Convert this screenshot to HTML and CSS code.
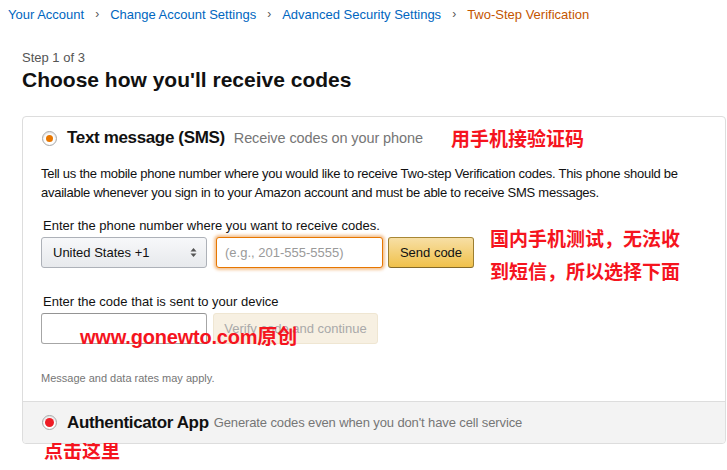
FILE: index.html
```html
<!DOCTYPE html>
<html lang="en">

<head>
  <meta charset="UTF-8">
  <meta name="viewport" content="width=device-width, initial-scale=1.0">
  <title>Two-Step Verification</title>
  <link rel="stylesheet" href="styles.css">
</head>

<body>
  <nav class="crumbs">
    <a href="javascript:;">Your Account</a>
    <span class="sep">›</span>
    <a href="javascript:;">Change Account Settings</a>
    <span class="sep">›</span>
    <a href="javascript:;">Advanced Security Settings</a>
    <span class="sep">›</span>
    <span class="current">Two-Step Verification</span>
  </nav>

  <div class="page">
    <div class="step">Step 1 of 3</div>
    <h1>Choose how you'll receive codes</h1>

    <div class="options">
      <!-- 短信方式 -->
      <section class="option option-sms">
        <div class="option-head">
          <span class="radio radio-on"></span>
          <strong>Text message (SMS)</strong>
          <span class="hint hint-big">Receive codes on your phone</span>
        </div>
        <p class="intro">Tell us the mobile phone number where you would like to receive Two-step Verification codes. This phone should be available whenever you sign in to your Amazon account and must be able to receive SMS messages.</p>

        <div class="field-label">Enter the phone number where you want to receive codes.</div>
        <div class="row">
          <div class="select">United States +1
            <svg class="arrows" width="7" height="11" viewBox="0 0 7 11">
              <path d="M3.5 1 L6.5 4.5 H0.5 Z M3.5 10 L6.5 6.5 H0.5 Z" fill="#555"/>
            </svg>
          </div>
          <input class="text-input phone" type="text" placeholder="(e.g., 201-555-5555)">
          <button class="btn btn-primary">Send code</button>
        </div>

        <div class="field-label field-label-code">Enter the code that is sent to your device</div>
        <div class="row row-code">
          <input class="text-input code" type="text">
          <button class="btn btn-disabled">Verify code and continue</button>
        </div>

        <p class="fine">Message and data rates may apply.</p>

        <!-- 标注 -->
        <div class="note note-top">用手机接验证码</div>
        <div class="note note-side">国内手机测试，无法收<br>到短信，所以选择下面</div>
        <div class="note note-site">www.gonewto.com原创</div>
      </section>

      <!-- 验证器 -->
      <section class="option option-app">
        <div class="option-head">
          <span class="radio radio-red"></span>
          <strong>Authenticator App</strong>
          <span class="hint">Generate codes even when you don't have cell service</span>
        </div>
      </section>
    </div>

    <div class="note note-click">点击这里</div>
  </div>
</body>

</html>
```

FILE: styles.css
```css
html,
body {
  margin: 0;
  padding: 0;
  background: #fff;
  font-family: "Liberation Sans", Arial, sans-serif;
  color: #111;
}

a {
  text-decoration: none;
}

/* 面包屑 */
.crumbs {
  display: flex;
  align-items: center;
  height: 28px;
  padding-left: 8px;
  font-size: 13px;
}

.crumbs a {
  color: #0066c0;
}

.crumbs .sep {
  margin: 0 11px;
  color: #555;
  font-size: 12px;
}

.crumbs .current {
  color: #c45500;
}

.page {
  padding: 22px 1px 0 22px;
}

.step {
  font-size: 13px;
  color: #555;
  line-height: 16px;
}

.page h1 {
  margin: 1px 0 23px;
  font-size: 21px;
  line-height: 26px;
  font-weight: bold;
}

.options {
  border: 1px solid #ddd;
  border-radius: 4px;
}

.option {
  position: relative;
  padding: 0 18px;
}

.option-head {
  display: flex;
  align-items: center;
  height: 42px;
}

.radio {
  position: relative;
  box-sizing: border-box;
  width: 15px;
  height: 15px;
  margin: 0 10px 0 1px;
  border: 1px solid #a6a6a6;
  border-radius: 50%;
  background: #fff;
  box-shadow: inset 0 1px 2px rgba(0, 0, 0, 0.15);
}

.radio::after {
  content: "";
  position: absolute;
  left: 3px;
  top: 3px;
  width: 7px;
  height: 7px;
  border-radius: 50%;
}

.radio-on::after {
  background: #e77600;
}

.radio-red::after {
  left: 2px;
  top: 2px;
  width: 9px;
  height: 9px;
  background: #ee1c25;
}

.option-head strong {
  font-size: 17px;
  letter-spacing: -0.35px;
  margin-right: 9px;
}

.option-app .option-head strong {
  margin-right: 5px;
}

.hint {
  font-size: 13px;
  letter-spacing: -0.12px;
  color: #767676;
}

.hint-big {
  font-size: 14.5px;
  letter-spacing: -0.1px;
}

.intro {
  margin: 5px 0 0;
  font-size: 13px;
  line-height: 19px;
  letter-spacing: -0.25px;
}

.field-label {
  margin: 15px 0 3px 2px;
  font-size: 13px;
  line-height: 17px;
}

.field-label-code {
  margin-top: 25px;
}

.row {
  display: flex;
  align-items: center;
}

.select {
  box-sizing: border-box;
  display: flex;
  align-items: center;
  justify-content: space-between;
  width: 166px;
  height: 31px;
  padding: 0 9px 0 11px;
  border: 1px solid #adb1b8;
  border-radius: 3px;
  background: linear-gradient(#f7f8fa, #e7e9ec);
  font-size: 13px;
  color: #111;
}

.text-input {
  box-sizing: border-box;
  height: 31px;
  padding: 0 8px;
  border: 1px solid #a6a6a6;
  border-top-color: #949494;
  border-radius: 3px;
  font-family: inherit;
  font-size: 13px;
  outline: none;
}

.text-input::placeholder {
  color: #9a9a9a;
}

.phone {
  width: 167px;
  margin-left: 9px;
  border-color: #e77600;
  box-shadow: 0 0 3px 2px rgba(228, 121, 17, 0.45);
}

.code {
  width: 166px;
}

.btn {
  box-sizing: border-box;
  height: 31px;
  border-radius: 3px;
  font-family: inherit;
  font-size: 13px;
  padding: 0;
}

.btn-primary {
  width: 86px;
  margin-left: 5px;
  border: 1px solid;
  border-color: #a88734 #9c7e31 #846a29;
  background: linear-gradient(#f7dfa5, #f0c14b);
  color: #111;
}

.btn-disabled {
  width: 165px;
  margin-left: 6px;
  border: 1px solid #efe6d2;
  background: #f7f0e2;
  color: #a9a9a9;
}

.fine {
  margin: 27px 0 0;
  padding-bottom: 16px;
  font-size: 11px;
  line-height: 14px;
  color: #767676;
}

.option-app {
  border-top: 1px solid #ddd;
  background: #f3f3f3;
  border-radius: 0 0 4px 4px;
}

.option-app .option-head {
  height: 41px;
}

/* 红色标注 */
.note {
  font-family: "Noto Sans CJK SC", sans-serif;
  font-weight: bold;
  font-size: 19px;
  color: #f5141e;
}

.note-top {
  position: absolute;
  left: 428px;
  top: 8px;
  line-height: 26px;
}

.note-side {
  position: absolute;
  left: 467px;
  top: 104px;
  line-height: 33px;
}

.note-site {
  position: absolute;
  left: 57px;
  top: 207px;
  font-family: "Liberation Sans", "Noto Sans CJK SC", sans-serif;
  font-size: 20px;
  line-height: 26px;
  letter-spacing: -0.2px;
}

.note-click {
  margin: -7px 0 0 22px;
  line-height: 26px;
}
```
